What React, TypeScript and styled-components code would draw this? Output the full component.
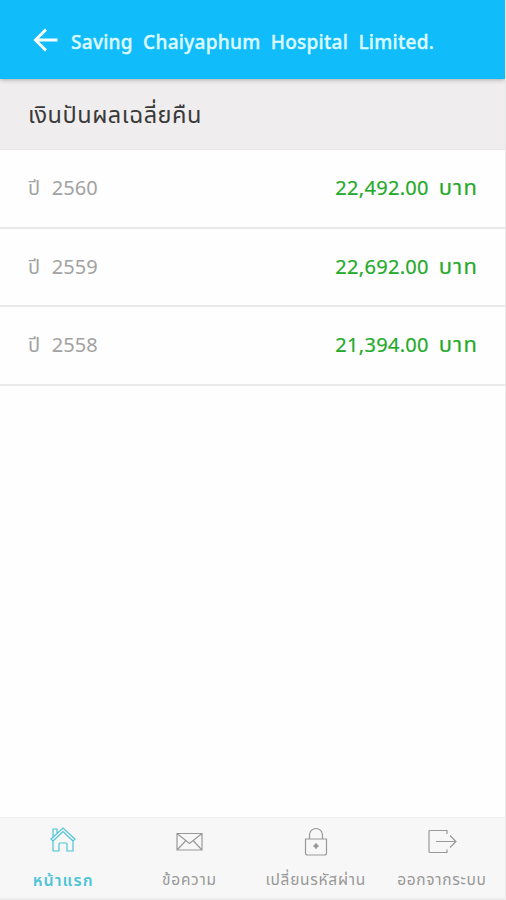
import React from "react";
import styled, { createGlobalStyle } from "styled-components";

const GlobalStyle = createGlobalStyle`
  * { box-sizing: border-box; }
  body { margin: 0; background: #fefefe; font-family: "Noto Sans Thai", "Noto Sans", "Open Sans", sans-serif; }
`;

const Screen = styled.div`
  width: 506px;
  height: 900px;
  display: flex;
  flex-direction: column;
  background: #fefefe;
  border-right: 1px solid #e9e9ec;
  border-bottom: 2px solid #ececec;
  overflow: hidden;
`;

const Header = styled.header`
  height: 79px;
  flex: none;
  display: flex;
  align-items: center;
  padding: 9px 0 0 33px;
  background: #10bcfa;
  color: #dcfaff;
  box-shadow: 0 1px 4px rgba(60, 50, 50, 0.35);
  z-index: 1;
`;

const BackButton = styled.button`
  width: 26px;
  height: 26px;
  margin: -8px 12px 0 0;
  padding: 0;
  border: 0;
  background: none;
  color: #f4feff;
  display: flex;
`;

const Title = styled.h1`
  margin: 0;
  font-size: 19px;
  line-height: 28px;
  font-weight: 500;
  letter-spacing: 0.27px;
  word-spacing: 5px;
  white-space: nowrap;
  -webkit-text-stroke: 0.4px currentColor;
`;

const SectionTitle = styled.h2`
  height: 71px;
  flex: none;
  margin: 0;
  padding: 4px 28px 0;
  display: flex;
  align-items: center;
  background: #efedee;
  border-bottom: 1px solid #e8e6e7;
  color: #3a3a3a;
  font-size: 23.500px;
  font-weight: 400;
  letter-spacing: 0.5px;
  white-space: nowrap;
`;

const List = styled.ul`
  flex: 1;
  margin: 0;
  padding: 0;
  list-style: none;
`;

const Row = styled.li`
  height: 78.5px;
  display: flex;
  align-items: center;
  justify-content: space-between;
  padding: 2px 28px 0;
  border-bottom: 2px solid #e9e9e9;
  font-size: 20px;
  line-height: 30px;
  white-space: nowrap;
`;

const Year = styled.span`
  color: #a2a2a2;
  word-spacing: 6.500px;
`;

const Amount = styled.span`
  display: flex;
  align-items: baseline;
  gap: 10px;
  color: #24aa2b;
  letter-spacing: 0.3px;
  -webkit-text-stroke: 0.2px currentColor;
`;

const Unit = styled.span`
  font-size: 22px;
  letter-spacing: 1.3px;
  margin-right: -1.3px;
`;

const Nav = styled.nav`
  height: 81px;
  flex: none;
  display: grid;
  grid-template-columns: repeat(4, 1fr);
  background: #f7f7f7;
  border-top: 1px solid #f0f0f0;
`;

const NavItem = styled.div<{ $active?: boolean }>`
  display: flex;
  flex-direction: column;
  align-items: center;
  padding-top: 8px;
  gap: 11px;
  color: ${(p) => (p.$active ? "#4fc4d8" : "#999")};
  font-weight: ${(p) => (p.$active ? 600 : 400)};
  font-size: ${(p) => (p.$active ? "16px" : "15.5px")};
  line-height: 28px;
  letter-spacing: ${(p) => (p.$active ? "1.1px" : "0.7px")};
  white-space: nowrap;
`;

const Icon = styled.svg`
  width: 30px;
  height: 30px;
  fill: none;
  stroke: currentColor;
  stroke-width: 1.2;
`;

const records = [
  ["2560", "22,492.00"],
  ["2559", "22,692.00"],
  ["2558", "21,394.00"],
];

const tabs = [
  { label: "หน้าแรก", active: true, icon: <path d="M3 13 15 2l12 11-2 2v10h-6v-7q0-1-1-1h-6q-1 0-1 1v7H5V15zM5 11V3h4v4M5 15l10-9.500 10 9.500" /> },
  { label: "ข้อความ", icon: <path d="M3 7.500h25v16.500h-25zl12.500 10 12.500-10M3 24l8.500-9m16.500 9-8.500-9" /> },
  { label: "เปลี่ยนรหัสผ่าน", icon: <path d="M4.500 13h21v14q0 2-2 2h-17q-2 0-2-2zM8.500 13V9a6.500 6.500 0 0 1 13 0v4M15 17v6m-3-3h6m-3-2 2 2-2 2-2-2z" /> },
  { label: "ออกจากระบบ", icon: <path d="M20 8V4.500H3q-1 0-1 1v20q0 1 1 1h17v-3M9 15.500h20m-6-6 6 6-6 6" /> },
];

export default function App() {
  return (
    <>
      <GlobalStyle />
      <Screen>
        <Header>
          <BackButton aria-label="Back">
            <svg width="26" height="26" viewBox="0 0 26 26" fill="none" stroke="currentColor" strokeWidth="3">
              <path d="M24.500 13H3M13 2.500 2.500 13 13 23.500" />
            </svg>
          </BackButton>
          <Title>Saving Chaiyaphum Hospital Limited.</Title>
        </Header>
        <SectionTitle>เงินปันผลเฉลี่ยคืน</SectionTitle>
        <List>
          {records.map(([year, amount]) => (
            <Row key={year}>
              <Year>ปี {year}</Year>
              <Amount>
                {amount} <Unit>บาท</Unit>
              </Amount>
            </Row>
          ))}
        </List>
        <Nav>
          {tabs.map((t) => (
            <NavItem key={t.label} $active={t.active}>
              <Icon viewBox="0 0 30 30">{t.icon}</Icon>
              <span>{t.label}</span>
            </NavItem>
          ))}
        </Nav>
      </Screen>
    </>
  );
}
